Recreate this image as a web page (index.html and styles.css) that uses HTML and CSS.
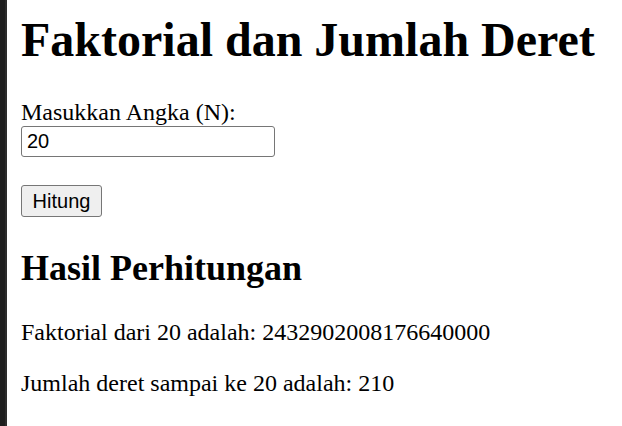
FILE: index.html
```html
<!DOCTYPE html>
<html lang="id">
<head>
<meta charset="utf-8">
<title>Faktorial dan Jumlah Deret</title>
<link rel="stylesheet" href="styles.css">
</head>
<body>
<h1 class="title">Faktorial dan Jumlah Deret</h1>
<form class="form">
  <label class="label" for="n">Masukkan Angka (N):</label>
  <input class="input" id="n" type="number" value="20">
  <button class="btn" type="button">Hitung</button>
</form>
<h2 class="subtitle">Hasil Perhitungan</h2>
<p class="result">Faktorial dari 20 adalah: 2432902008176640000</p>
<p class="result">Jumlah deret sampai ke 20 adalah: 210</p>
</body>
</html>
```
FILE: styles.css
```css
html {
  background: linear-gradient(to right, #1e1e1e 0 5px, #2c2c2c 5px 7px, #ffffff 7px);
  min-height: 100%;
}
body {
  margin: 0;
  padding: 12px 12px 12px 21px;
  font-family: "Liberation Serif", "Times New Roman", serif;
  font-size: 24px;
  color: #000;
}
.title {
  margin: 0 0 32px;
  font-size: 48px;
  font-weight: bold;
}
.form {
  display: flex;
  flex-direction: column;
  align-items: flex-start;
  margin: 0;
}
.label {
  line-height: 27px;
}
.input {
  box-sizing: border-box;
  width: 254px;
  height: 31px;
  margin: 0;
  padding: 0 5px;
  border: 1px solid #767676;
  border-radius: 3px;
  font-family: "Liberation Sans", Arial, sans-serif;
  font-size: 20px;
  color: #000;
  background: #fff;
  -moz-appearance: textfield;
  appearance: textfield;
}
.input::-webkit-outer-spin-button,
.input::-webkit-inner-spin-button {
  -webkit-appearance: none;
  margin: 0;
}
.btn {
  box-sizing: border-box;
  margin-top: 28px;
  width: 81px;
  height: 32px;
  padding: 0;
  border: 1px solid #767676;
  border-radius: 3px;
  background: #efefef;
  font-family: "Liberation Sans", Arial, sans-serif;
  font-size: 20px;
  color: #000;
}
.subtitle {
  margin: 30px 0 30px;
  font-size: 36px;
  font-weight: bold;
}
.result {
  margin: 0 0 24px;
}
```
